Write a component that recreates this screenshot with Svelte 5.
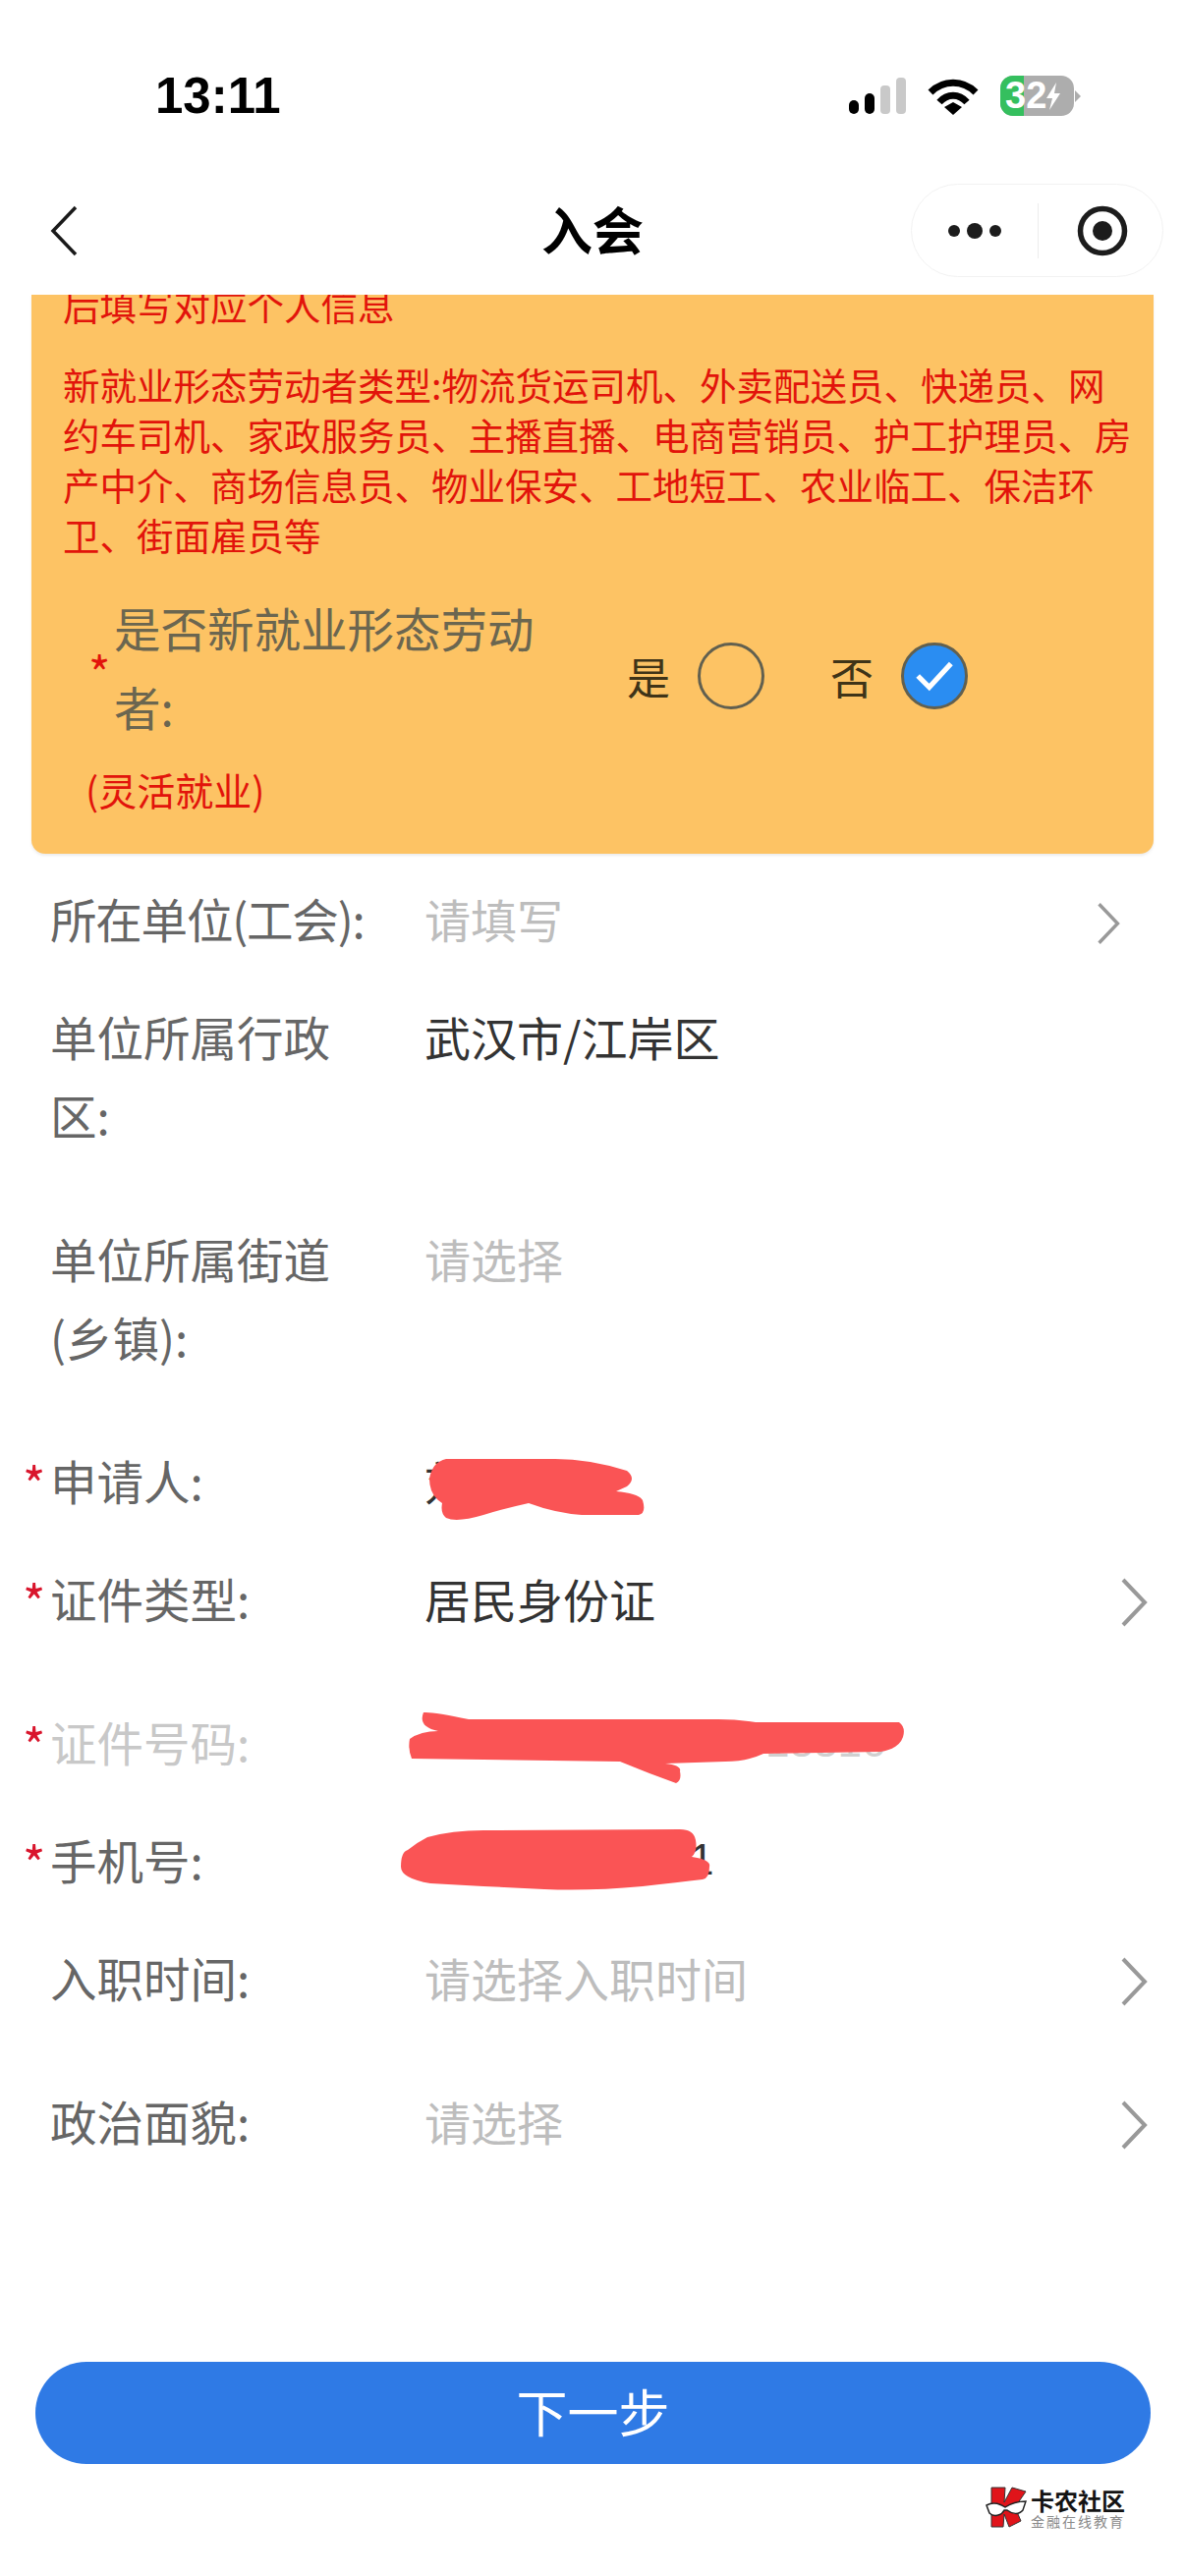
<script lang="ts">
  type Row = {
    label: string;
    value?: string;
    kind?: string;
    required?: boolean;
    chevron?: string;
    spaced?: boolean;
    disabled?: boolean;
  };

  const rows: Row[] = [
    { label: "所在单位(工会):", value: "请填写", kind: "placeholder", chevron: "small" },
    { label: "单位所属行政区:", value: "武汉市/江岸区" },
    { label: "单位所属街道(乡镇):", value: "请选择", kind: "placeholder", spaced: true },
    { label: "申请人:", value: "刘", required: true, spaced: true },
    { label: "证件类型:", value: "居民身份证", required: true, chevron: "large" },
    { label: "证件号码:", value: "18316", kind: "id", required: true, spaced: true, disabled: true },
    { label: "手机号:", value: "1", kind: "phone", required: true },
    { label: "入职时间:", value: "请选择入职时间", kind: "placeholder", chevron: "large" },
    { label: "政治面貌:", value: "请选择", kind: "placeholder", chevron: "large", spaced: true }
  ];

  const intro = "新就业形态劳动者类型:物流货运司机、外卖配送员、快递员、网约车司机、家政服务员、主播直播、电商营销员、护工护理员、房产中介、商场信息员、物业保安、工地短工、农业临工、保洁环卫、街面雇员等";
</script>

<div class="page">
  <header class="status">
    <span class="time">13:11</span>
    <div class="indicators">
      <svg class="signal" viewBox="0 0 58 37" width="58" height="37">
        <rect x="0" y="23" width="10" height="14" rx="5" fill="#000" />
        <rect x="16" y="16" width="10" height="21" rx="5" fill="#000" />
        <rect x="32" y="8" width="10" height="29" rx="4" fill="#c9c9c9" />
        <rect x="48" y="0" width="10" height="37" rx="4" fill="#c9c9c9" />
      </svg>
      <svg class="wifi" viewBox="0 0 52 38" width="52" height="38">
        <path d="M3 15 C16 2 36 2 49 15" fill="none" stroke="#000" stroke-width="7" />
        <path d="M12 25 C20 16 32 16 40 25" fill="none" stroke="#000" stroke-width="7" />
        <path d="M17 30 L26 25 L35 30 L26 38 Z" fill="#000" />
      </svg>
      <div class="battery">
        <span class="battery-fill"></span>
        <span class="battery-text">32</span>
        <svg class="bolt" viewBox="0 0 14 28" width="14" height="28">
          <path d="M10 0 L0 16 H6 L3 28 L14 11 H8 Z" fill="#fff" />
        </svg>
        <span class="battery-nub"></span>
      </div>
    </div>
  </header>

  <nav class="nav">
    <svg class="back" viewBox="0 0 28 52" width="28" height="52">
      <path d="M26 2 L3 26 L26 50" fill="none" stroke="#1a1a1a" stroke-width="3.5" />
    </svg>
    <h1 class="title">入会</h1>
    <div class="capsule">
      <svg viewBox="0 0 56 20" width="56" height="20">
        <circle cx="7" cy="10" r="6" fill="#1c1c1c" />
        <circle cx="28" cy="10" r="8" fill="#1c1c1c" />
        <circle cx="49" cy="10" r="6" fill="#1c1c1c" />
      </svg>
      <span class="capsule-line"></span>
      <svg viewBox="0 0 52 52" width="52" height="52">
        <circle cx="26" cy="26" r="22.5" fill="none" stroke="#1c1c1c" stroke-width="5.5" />
        <circle cx="26" cy="26" r="10" fill="#1c1c1c" />
      </svg>
    </div>
  </nav>

  <main class="content">
    <section class="banner">
      <p class="banner-cut">后填写对应个人信息</p>
      <p class="banner-text">{intro}</p>
      <div class="question">
        <div class="question-label">
          <span class="star">*</span>
          <div class="question-text">是否新就业形态劳动者:</div>
          <div class="question-note">(灵活就业)</div>
        </div>
        <div class="choices">
          <span class="choice">是</span>
          <span class="radio"></span>
          <span class="choice second">否</span>
          <span class="radio checked">
            <svg viewBox="0 0 40 32" width="42" height="34">
              <path d="M4 16 L15 27 L36 4" fill="none" stroke="#fff" stroke-width="5" />
            </svg>
          </span>
        </div>
      </div>
    </section>

    <form class="form">
      {#each rows as row}
        <div class="row" class:spaced={row.spaced}>
          {#if row.required}<span class="req">*</span>{/if}
          <div class="label" class:disabled={row.disabled}>{row.label}</div>
          <div class="value {row.kind ?? ''}">{row.value}</div>
          {#if row.chevron}
            <svg class="chevron {row.chevron}" viewBox="0 0 28 50" width="28" height="50">
              <path d="M3 2 L25 25 L3 48" fill="none" stroke="#999" stroke-width="4" />
            </svg>
          {/if}
        </div>
      {/each}
    </form>
  </main>

  <footer class="footer">
    <button class="next" type="button">下一步</button>
    <div class="brand">
      <svg viewBox="0 0 42 42" width="42" height="42">
        <path d="M6 1 H20 L19 16 L27 1 L41 5 L30 21 L36 35 L24 41 L19 28 L18 41 H6 Z" fill="#e0141a" stroke="#333" stroke-width="1" />
        <path d="M1 19 C8 15 14 17 20 21 C26 17 33 15 41 15 L38 24 C34 29 27 28 22 24 L19 24 C16 30 8 31 4 27 Z" fill="#fff" stroke="#222" stroke-width="1.5" />
      </svg>
      <div class="brand-text">
        <strong>卡农社区</strong>
        <small>金融在线教育</small>
      </div>
    </div>
  </footer>

  <svg class="scribbles" viewBox="0 0 1206 2622" width="1206" height="2622">
    <path fill="#fa5455" d="M437 1505 Q440 1488 454 1485 L565 1485 Q600 1485 638 1497 Q648 1505 638 1513 L627 1518 Q650 1520 654 1527 Q658 1540 650 1542 L592 1542 Q565 1540 538 1530 Q515 1535 492 1542 Q465 1550 454 1545 Q448 1540 450 1530 Q437 1522 437 1505 Z" />
    <path fill="#fa5455" d="M431 1743 Q440 1742 477 1750 L731 1750 Q750 1750 769 1753 L915 1753 Q922 1758 919 1768 Q915 1780 896 1783 L777 1785 Q760 1793 738 1793 L677 1795 Q694 1797 692 1803 Q694 1812 688 1815 Q660 1805 631 1793 L419 1790 Q415 1780 417 1770 Q428 1762 446 1762 Q425 1758 431 1743 Z" />
    <path fill="#fa5455" d="M435 1870 Q460 1863 492 1863 L692 1862 Q706 1862 708 1873 Q710 1885 704 1890 Q724 1893 722 1900 Q722 1912 715 1913 Q690 1916 654 1920 Q600 1925 554 1923 L492 1920 L438 1917 Q408 1912 408 1900 Q408 1885 415 1883 Q425 1875 435 1870 Z" />
  </svg>
</div>

<style>
  :global(body) {
    margin: 0;
    background: #fff;
  }

  .page {
    position: relative;
    width: 1206px;
    height: 2622px;
    display: flex;
    flex-direction: column;
    overflow: hidden;
    background: #fff;
    font-family: "Noto Sans CJK SC", "Noto Sans", sans-serif;
  }

  .status {
    height: 187px;
    flex: none;
    box-sizing: border-box;
    padding: 68px 0 0 158px;
    position: relative;
    display: flex;
    justify-content: space-between;
    align-items: flex-start;
  }

  .time {
    font-family: "Liberation Sans", sans-serif;
    font-size: 51px;
    font-weight: 700;
    line-height: 60px;
    color: #000;
  }

  .indicators {
    display: flex;
    align-items: center;
    margin: 9px 113px 0 0;
  }

  .wifi {
    margin-left: 22px;
  }

  .battery {
    position: relative;
    margin-left: 22px;
    width: 75px;
    height: 41px;
    border-radius: 13px;
    background: #adadad;
    display: flex;
    align-items: center;
    color: #fff;
  }

  .battery-fill {
    position: absolute;
    left: 0;
    top: 0;
    bottom: 0;
    width: 24px;
    background: #35bf5e;
    border-radius: 13px 0 0 13px;
  }

  .battery-text {
    position: relative;
    margin-left: 5px;
    font-family: "Liberation Sans", sans-serif;
    font-size: 38px;
    line-height: 41px;
    font-weight: 700;
  }

  .bolt {
    position: relative;
  }

  .battery-nub {
    position: absolute;
    right: -7px;
    top: 15px;
    width: 0;
    height: 0;
    border-left: 6px solid #adadad;
    border-top: 6px solid transparent;
    border-bottom: 6px solid transparent;
  }

  .nav {
    height: 113px;
    flex: none;
    position: relative;
    display: flex;
    justify-content: center;
  }

  .back {
    position: absolute;
    left: 51px;
    top: 22px;
  }

  .title {
    margin: 17px 0 0;
    font-size: 52px;
    font-weight: 700;
    line-height: 58px;
    color: #000;
  }

  .capsule {
    position: absolute;
    right: 22px;
    top: 0;
    width: 257px;
    height: 95px;
    box-sizing: border-box;
    border: 1px solid #f2f2f2;
    border-radius: 48px;
    display: flex;
    align-items: center;
    padding-left: 36px;
  }

  .capsule-line {
    width: 1px;
    height: 56px;
    background: #ececec;
    margin: 0 39px 0 36px;
  }

  .content {
    flex: 1;
    min-height: 0;
    overflow: hidden;
  }

  .banner {
    box-sizing: border-box;
    margin: 0 32px;
    height: 569px;
    background: #fdc364;
    border-radius: 0 0 14px 14px;
    box-shadow: 0 2px 3px rgba(0, 0, 0, 0.08);
    overflow: hidden;
    padding: 0 32px;
    color: #e2140b;
    font-size: 37.5px;
    line-height: 51px;
  }

  .banner-cut {
    margin: -16px 0 0;
  }

  .banner-text {
    margin: 30px -10px 0 0;
  }

  .question {
    display: flex;
    margin-top: 30px;
    position: relative;
  }

  .question-label {
    width: 574px;
    flex: none;
    position: relative;
    box-sizing: border-box;
    padding-left: 52px;
  }

  .star {
    position: absolute;
    left: 26px;
    top: 54px;
    font-size: 48px;
    line-height: 60px;
    color: #e2140b;
  }

  .question-text {
    width: 440px;
    font-size: 47.5px;
    line-height: 80px;
    color: #6b6650;
  }

  .question-note {
    margin: 19px 0 0 -29px;
    font-size: 39px;
    line-height: 50px;
  }

  .choices {
    display: flex;
    align-items: center;
    height: 68px;
    margin-top: 55px;
    color: #3f3418;
    font-size: 44px;
  }

  .choice {
    width: 44px;
    margin-right: 28px;
    flex: none;
  }

  .choice.second {
    margin-left: 67px;
    margin-right: 28px;
  }

  .radio {
    width: 68px;
    height: 68px;
    flex: none;
    box-sizing: border-box;
    border: 3px solid #62604f;
    border-radius: 50%;
    display: flex;
    align-items: center;
    justify-content: center;
  }

  .radio.checked {
    background: #2a8df2;
  }

  .form {
    padding: 26px 0 0;
  }

  .row {
    position: relative;
    display: flex;
    margin-top: 40px;
    padding-left: 51px;
    min-height: 80px;
    font-size: 47.5px;
    line-height: 80px;
  }

  .row:first-child {
    margin-top: 0;
  }

  .row:first-child .label {
    white-space: nowrap;
    letter-spacing: -1.2px;
  }

  .row.spaced {
    margin-top: 66px;
  }

  .req {
    position: absolute;
    left: 23px;
    top: 12px;
    color: #d9152c;
    font-size: 50px;
    line-height: 60px;
  }

  .label {
    width: 300px;
    margin-right: 81px;
    flex: none;
    color: #666;
  }

  .label.disabled {
    color: #c8c8c8;
  }

  .value {
    color: #333;
    font-size: 47px;
  }

  .value.placeholder {
    color: #bdbdbd;
  }

  .value.id {
    padding-left: 347px;
    color: #d0d0d0;
    font-family: "Liberation Sans", sans-serif;
    font-size: 44px;
  }

  .value.phone {
    padding-left: 270px;
    font-family: "Liberation Sans", sans-serif;
    font-size: 44px;
  }

  .chevron {
    position: absolute;
    right: 38px;
    top: 19px;
  }

  .chevron.small {
    right: 66px;
    top: 23px;
    width: 24px;
    height: 44px;
  }

  .footer {
    flex: none;
    height: 218px;
    padding: 0 36px;
    position: relative;
  }

  .next {
    display: block;
    width: 1135px;
    height: 104px;
    border: 0;
    border-radius: 52px;
    background: #2f7ae5;
    color: #fff;
    font-family: inherit;
    font-size: 52px;
    padding: 0 0 6px;
  }

  .brand {
    position: absolute;
    left: 1003px;
    top: 127px;
    display: flex;
    align-items: flex-start;
  }

  .brand-text {
    display: flex;
    flex-direction: column;
    margin: 2px 0 0 4px;
  }

  .brand-text strong {
    font-size: 24px;
    line-height: 24px;
    color: #141414;
  }

  .brand-text small {
    font-size: 14px;
    line-height: 16px;
    margin-top: 1px;
    letter-spacing: 2px;
    color: #8a8a8a;
    white-space: nowrap;
  }

  .scribbles {
    position: absolute;
    left: 0;
    top: 0;
    pointer-events: none;
  }
</style>
